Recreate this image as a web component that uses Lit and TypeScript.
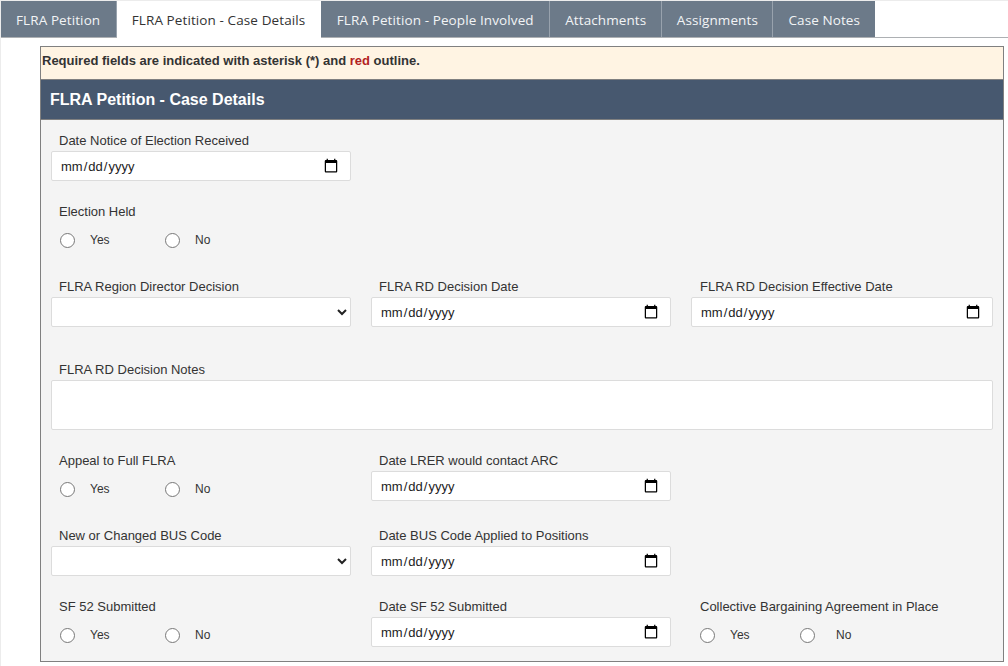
import { LitElement, html, css } from "lit";
import { customElement } from "lit/decorators.js";

const TABS = ["FLRA Petition", "FLRA Petition - Case Details", "FLRA Petition - People Involved", "Attachments", "Assignments", "Case Notes"];

@customElement("app-root")
export class AppRoot extends LitElement {
  static styles = css`
    :host { display: block; height: 666px; overflow: hidden; background: #fff; box-sizing: border-box; border-top: 1px solid #ececec; border-left: 1px solid #ececec; font-family: "Liberation Sans", Arial, sans-serif; }
    .tabs { display: flex; height: 36px; border-bottom: 1px solid #adb0b3; }
    .tab { display: flex; align-items: center; padding: 2px 14.5px 0 15px; box-sizing: border-box; height: 36px; border-right: 1px solid #98a2ad; background: #6c7a89; color: #f2f4f6; font: 13.5px "Open Sans", sans-serif; letter-spacing: 0.1px; white-space: nowrap; }
    .tab:first-child { padding-right: 15.5px; }
    .tab:nth-child(3) { padding-left: 16px; padding-right: 15.5px; }
    .tab:last-child { border-right: 0; }
    .tab.active { background: #fff; color: #333; height: 37px; padding-bottom: 1px; border-right-color: #fff; }
    .panel { margin: 8px 4px 0 39px; border: 1px solid #808080; background: #f4f4f4; height: 616px; box-sizing: border-box; }
    .notice { height: 33px; background: #fff4e3; border-bottom: 1px solid #808080; box-sizing: border-box; padding: 0 0 6px 1px; font: bold 13px "Liberation Sans", sans-serif; color: #333; display: flex; align-items: center; white-space: pre; }
    .notice span { color: #b22222; }
    .head { height: 40px; background: #47586f; border-bottom: 1px solid #808080; box-sizing: border-box; padding-left: 9px; display: flex; align-items: center; color: #fff; font: bold 16px "Liberation Sans", sans-serif; }
    .row { display: grid; grid-template-columns: 320px 320px 1fr; }
    .r1 { margin-top: 10px; } .r2 { margin-top: 20px; } .r3 { margin-top: 26px; } .r4 { margin-top: 32px; } .r5 { margin-top: 20px; } .r6 { margin-top: 24px; } .r7 { margin-top: 20px; }
    .full { grid-column: 1 / -1; }
    .field { padding: 0 10px; min-width: 0; }
    .field:nth-child(3) label.l { padding-left: 9px; }
    label.l { display: block; height: 21px; padding-left: 8px; font-size: 13px; line-height: 21px; color: #333; white-space: nowrap; }
    input[type=date], select, textarea { display: block; width: 100%; height: 30px; box-sizing: border-box; margin: 0; border: 1px solid #dcdcdc; border-radius: 2px; background: #fff; font: 13px "Liberation Sans", sans-serif; color: #222; padding: 0 9px; outline: none; }
    input[type=date] { padding: 0 8px; }
    input[type=date]::-webkit-calendar-picker-indicator { width: 16px; height: 16px; padding: 0; margin: 0 3px 0 0; }
    select { padding: 0 5px; }
    textarea { height: 50px; resize: none; }
    .radios { display: flex; align-items: center; height: 20px; margin-top: 8px; padding-left: 8px; font-size: 12px; color: #333; }
    .radios input { width: 15px; height: 15px; margin: 0 15px 0 1px; }
    .opt { display: flex; align-items: center; width: 105px; line-height: 18px; }
    .cba .opt { width: 100px; }
    .cba .opt + .opt input { margin-right: 21px; }
  `;

  private date() { return html`<input type="date" />`; }
  private radios(name: string, cls = "") {
    return html`<div class="radios ${cls}">
      <span class="opt"><input type="radio" name=${name} /><span>Yes</span></span>
      <span class="opt"><input type="radio" name=${name} /><span>No</span></span>
    </div>`;
  }
  private f(label: string, body: unknown) {
    return html`<div class="field"><label class="l">${label}</label>${body}</div>`;
  }

  render() {
    return html`
      <div class="tabs">
        ${TABS.map((t, i) => html`<div class="tab ${i === 1 ? "active" : ""}">${t}</div>`)}
      </div>
      <div class="panel">
        <div class="notice">Required fields are indicated with asterisk (*) and <span>red</span> outline.</div>
        <div class="head">FLRA Petition - Case Details</div>
        <div class="row r1">${this.f("Date Notice of Election Received", this.date())}</div>
        <div class="row r2">${this.f("Election Held", this.radios("held"))}</div>
        <div class="row r3">
          ${this.f("FLRA Region Director Decision", html`<select><option></option></select>`)}
          ${this.f("FLRA RD Decision Date", this.date())}
          ${this.f("FLRA RD Decision Effective Date", this.date())}
        </div>
        <div class="row r4"><div class="field full"><label class="l">FLRA RD Decision Notes</label><textarea></textarea></div></div>
        <div class="row r5">
          ${this.f("Appeal to Full FLRA", this.radios("appeal"))}
          ${this.f("Date LRER would contact ARC", this.date())}
        </div>
        <div class="row r6">
          ${this.f("New or Changed BUS Code", html`<select><option></option></select>`)}
          ${this.f("Date BUS Code Applied to Positions", this.date())}
        </div>
        <div class="row r7">
          ${this.f("SF 52 Submitted", this.radios("sf52"))}
          ${this.f("Date SF 52 Submitted", this.date())}
          ${this.f("Collective Bargaining Agreement in Place", this.radios("cba", "cba"))}
        </div>
      </div>
    `;
  }
}
